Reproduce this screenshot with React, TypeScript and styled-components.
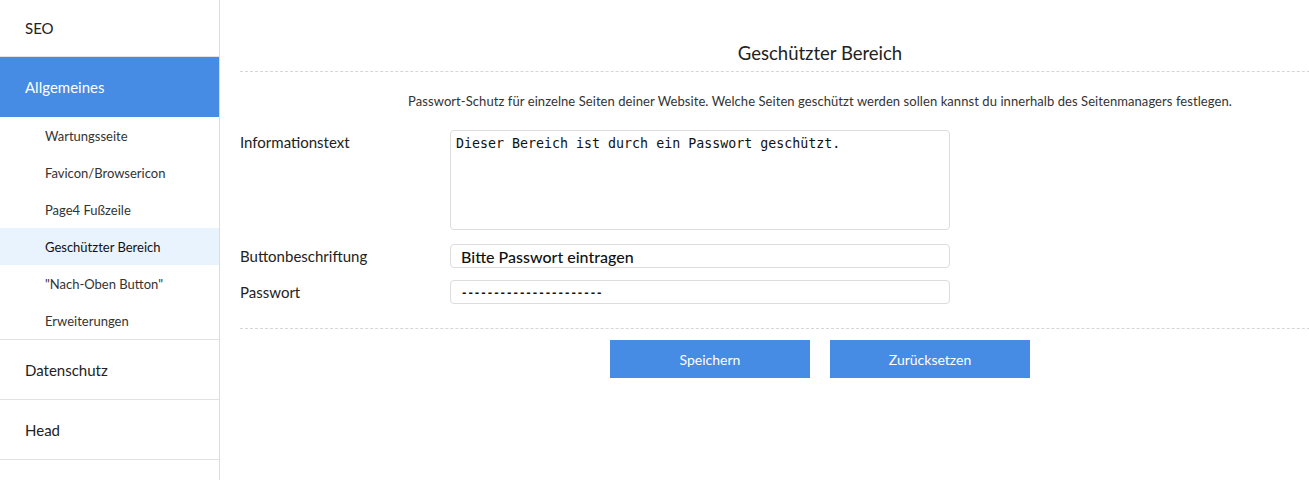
import React from "react";
import styled, { createGlobalStyle } from "styled-components";

const Global = createGlobalStyle`
  html, body { margin: 0; padding: 0; background: #fff; overflow: hidden; }
  body { font-family: Lato, "Noto Sans", sans-serif; color: #222; }
  * { box-sizing: border-box; }
`;

const Layout = styled.div`
  display: flex;
  width: 1309px;
  height: 480px;
  overflow: hidden;
`;

const Sidebar = styled.nav`
  width: 220px;
  flex: none;
  border-right: 1px solid #dcdcdc;
  display: flex;
  flex-direction: column;
`;

const TopItem = styled.div<{ $active?: boolean; $h?: number }>`
  height: ${(p) => p.$h ?? 60}px;
  display: flex;
  align-items: center;
  padding-left: 25px;
  font-size: 15px;
  color: ${(p) => (p.$active ? "#fff" : "#222")};
  background: ${(p) => (p.$active ? "#468be4" : "#fff")};
  border-bottom: 1px solid ${(p) => (p.$active ? "#468be4" : "#e2e2e2")};
  flex: none;
`;

const SubList = styled.div`
  display: flex;
  flex-direction: column;
  border-bottom: 1px solid #e2e2e2;
`;

const SubItem = styled.div<{ $active?: boolean }>`
  height: 37px;
  display: flex;
  align-items: center;
  padding-left: 45px;
  font-size: 13px;
  color: ${(p) => (p.$active ? "#111" : "#333")};
  background: ${(p) => (p.$active ? "#e8f3fd" : "transparent")};
`;

const Main = styled.main`
  flex: none;
  width: 1180px;
  padding-left: 20px;
`;

const Title = styled.h1`
  margin: 0;
  height: 72px;
  padding-top: 40px;
  text-align: center;
  font-weight: 400;
  font-size: 18.5px;
  line-height: 26px;
  color: #222;
  border-bottom: 1px dashed #d6d6d6;
`;

const Description = styled.p`
  margin: 0;
  padding-top: 20px;
  text-align: center;
  font-size: 13px;
  letter-spacing: 0.07px;
  line-height: 18px;
  color: #333;
`;

const Form = styled.div`
  display: flex;
  flex-direction: column;
  gap: 12px;
  padding-top: 20px;
  padding-bottom: 24px;
  border-bottom: 1px dashed #d6d6d6;
`;

const Row = styled.div<{ $extra?: number }>`
  display: flex;
  align-items: flex-start;
  margin-bottom: ${(p) => p.$extra ?? 0}px;
`;

const Label = styled.label`
  width: 210px;
  flex: none;
  font-size: 15px;
  line-height: 24px;
  color: #222;
`;

const TextArea = styled.textarea`
  width: 500px;
  height: 100px;
  border: 1px solid #dcdcdc;
  border-radius: 4px;
  padding: 4px 5px;
  resize: none;
  font-family: "DejaVu Sans Mono", monospace;
  font-size: 13.3px;
  line-height: 18px;
  color: #111;
  outline: none;
`;

const Input = styled.input<{ $mono?: boolean }>`
  width: 500px;
  height: 24px;
  border: 1px solid #dcdcdc;
  border-radius: 4px;
  padding: 0 10px;
  font-family: ${(p) => (p.$mono ? '"DejaVu Sans Mono", monospace' : 'Lato, "Noto Sans", sans-serif')};
  font-size: ${(p) => (p.$mono ? "10.7px" : "16px")};
  font-weight: ${(p) => (p.$mono ? 700 : 500)};
  color: #111;
  outline: none;
`;

const Buttons = styled.div`
  display: flex;
  justify-content: center;
  gap: 20px;
  padding-top: 11px;
`;

const Button = styled.button`
  width: 200px;
  height: 38px;
  border: none;
  background: #468be4;
  color: #fff;
  font-family: Lato, "Noto Sans", sans-serif;
  font-size: 14px;
`;

export default function App() {
  return (
    <>
      <Global />
      <Layout>
        <Sidebar>
          <TopItem $h={57}>SEO</TopItem>
          <TopItem $active>Allgemeines</TopItem>
          <SubList>
            <SubItem>Wartungsseite</SubItem>
            <SubItem>Favicon/Browsericon</SubItem>
            <SubItem>Page4 Fußzeile</SubItem>
            <SubItem $active>Geschützter Bereich</SubItem>
            <SubItem>"Nach-Oben Button"</SubItem>
            <SubItem>Erweiterungen</SubItem>
          </SubList>
          <TopItem>Datenschutz</TopItem>
          <TopItem>Head</TopItem>
          <TopItem />
        </Sidebar>
        <Main>
          <Title>Geschützter Bereich</Title>
          <Description>
            Passwort-Schutz für einzelne Seiten deiner Website. Welche Seiten geschützt werden sollen kannst du innerhalb des Seitenmanagers festlegen.
          </Description>
          <Form>
            <Row $extra={2}>
              <Label>Informationstext</Label>
              <TextArea defaultValue="Dieser Bereich ist durch ein Passwort geschützt." />
            </Row>
            <Row>
              <Label>Buttonbeschriftung</Label>
              <Input defaultValue="Bitte Passwort eintragen" />
            </Row>
            <Row>
              <Label>Passwort</Label>
              <Input $mono defaultValue="----------------------" />
            </Row>
          </Form>
          <Buttons>
            <Button>Speichern</Button>
            <Button>Zurücksetzen</Button>
          </Buttons>
        </Main>
      </Layout>
    </>
  );
}
